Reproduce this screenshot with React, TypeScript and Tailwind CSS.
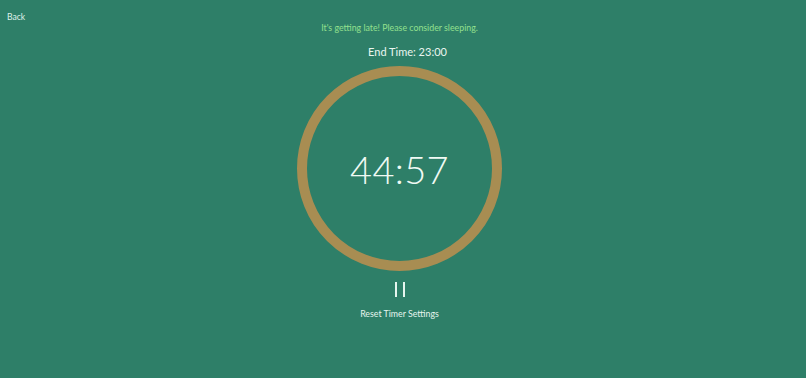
export default function App() {
  return (
    <div
      className="relative w-full h-[378px] bg-[#2e7f68] text-[#e6f5ee] overflow-hidden"
      style={{ fontFamily: "Lato, 'Open Sans', sans-serif" }}
    >
      <button className="absolute left-[7px] top-[10px] text-[8.6px] text-[#dff2ea] leading-[14px]">
        Back
      </button>

      <div className="flex flex-col items-center pt-[21px] pr-[7px]">
        <p className="text-[8.8px] leading-[14px] text-[#93e08e]">
          It's getting late! Please consider sleeping.
        </p>
        <p className="mt-[9px] ml-[16px] text-[11px] leading-[16px] text-[#eaf6f0]">End Time: 23:00</p>

        <div className="mt-[6px] w-[205px] h-[205px] rounded-full border-[10px] border-[#a88d52] flex items-center justify-center">
          <span className="text-[38px] font-light leading-none text-[#f0faf4] tracking-[0.3px]">
            44:57
          </span>
        </div>

        <button className="mt-[11px] flex gap-[6px] h-[15px] items-stretch" aria-label="Pause">
          <span className="w-[2px] bg-[#e6f5ee]" />
          <span className="w-[2px] bg-[#e6f5ee]" />
        </button>

        <button className="mt-[10px] text-[8.8px] leading-[14px] text-[#e6f5ee]">
          Reset Timer Settings
        </button>
      </div>
    </div>
  );
}
